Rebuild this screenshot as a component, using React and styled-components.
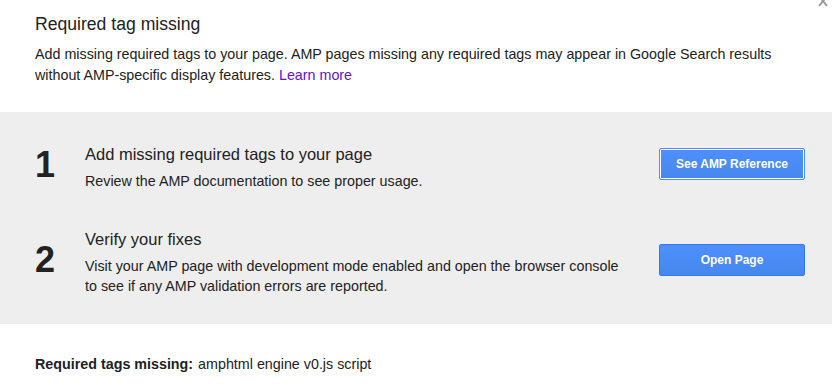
import React from 'react';
import styled, { createGlobalStyle } from 'styled-components';

const GlobalStyle = createGlobalStyle`
  html, body {
    margin: 0;
    padding: 0;
    background: #fff;
  }
  body {
    font-family: "Liberation Sans", Arial, sans-serif;
    color: #222;
  }
`;

const Dialog = styled.div`
  position: relative;
  width: 832px;
  height: 392px;
  overflow: hidden;
  background: #fff;
`;

const CloseButton = styled.button`
  position: absolute;
  top: -6px;
  right: 3px;
  border: 0;
  background: none;
  padding: 0;
  width: 12px;
  height: 14px;
  cursor: pointer;
`;

const Header = styled.div`
  padding: 12px 35px 0;
  height: 100px;
`;

const Title = styled.h1`
  margin: 0;
  font-size: 17.6px;
  font-weight: normal;
  line-height: 24px;
  color: #222;
`;

const Intro = styled.p`
  margin: 8px 0 0;
  font-size: 14.3px;
  line-height: 21px;
  color: #222;
`;

const LearnLink = styled.a`
  color: #6611cc;
  text-decoration: none;
`;

const Steps = styled.div`
  background: #eeeeee;
  height: 212px;
  box-sizing: border-box;
  padding: 31px 27px 0 35px;
  display: flex;
  flex-direction: column;
  gap: 37px;
`;

const Step = styled.div`
  display: flex;
  align-items: center;
`;

const Number = styled.div`
  width: 50px;
  margin-bottom: 5px;
  font-size: 36px;
  font-weight: bold;
  color: #222;
  line-height: 1;
`;

const StepBody = styled.div`
  flex: 1;
`;

const StepTitle = styled.div`
  font-size: 16.5px;
  line-height: 22px;
  color: #222;
`;

const StepText = styled.div`
  margin-top: 6px;
  font-size: 14.3px;
  line-height: 20px;
  color: #222;
`;

const ActionButton = styled.button`
  width: 146px;
  height: 32px;
  margin-bottom: ${(p) => (p.focused ? '6px' : '4px')};
  box-sizing: border-box;
  border: 1px solid ${(p) => (p.focused ? '#4d90fe' : '#3079ed')};
  border-radius: 2px;
  background: linear-gradient(#4d90fe, #4787ed);
  color: #fff;
  font-family: "Liberation Sans", Arial, sans-serif;
  font-size: 12px;
  font-weight: bold;
  cursor: pointer;
  box-shadow: ${(p) => (p.focused ? 'inset 0 0 0 1px #fff' : 'none')};
`;

const Footer = styled.div`
  padding: 30px 35px 0;
  font-size: 14.3px;
  line-height: 20px;
  color: #222;
`;

const Label = styled.span`
  font-weight: bold;
  margin-right: 5px;
`;

const CloseIcon = () => (
  <svg width="12" height="14" viewBox="0 0 12 14">
    <path d="M2 2 L10 12 M10 2 L2 12" stroke="#999" strokeWidth="2" fill="none" />
  </svg>
);

const App = () => (
  <>
    <GlobalStyle />
    <Dialog>
      <CloseButton aria-label="Close">
        <CloseIcon />
      </CloseButton>
      <Header>
        <Title>Required tag missing</Title>
        <Intro>
          Add missing required tags to your page. AMP pages missing any required tags may appear in Google Search results
          without AMP-specific display features. <LearnLink href="#">Learn more</LearnLink>
        </Intro>
      </Header>
      <Steps>
        <Step>
          <Number>1</Number>
          <StepBody>
            <StepTitle>Add missing required tags to your page</StepTitle>
            <StepText>Review the AMP documentation to see proper usage.</StepText>
          </StepBody>
          <ActionButton focused>See AMP Reference</ActionButton>
        </Step>
        <Step>
          <Number>2</Number>
          <StepBody>
            <StepTitle>Verify your fixes</StepTitle>
            <StepText>
              Visit your AMP page with development mode enabled and open the browser console
              <br />
              to see if any AMP validation errors are reported.
            </StepText>
          </StepBody>
          <ActionButton>Open Page</ActionButton>
        </Step>
      </Steps>
      <Footer>
        <Label>Required tags missing:</Label>
        amphtml engine v0.js script
      </Footer>
    </Dialog>
  </>
);

export default App;
